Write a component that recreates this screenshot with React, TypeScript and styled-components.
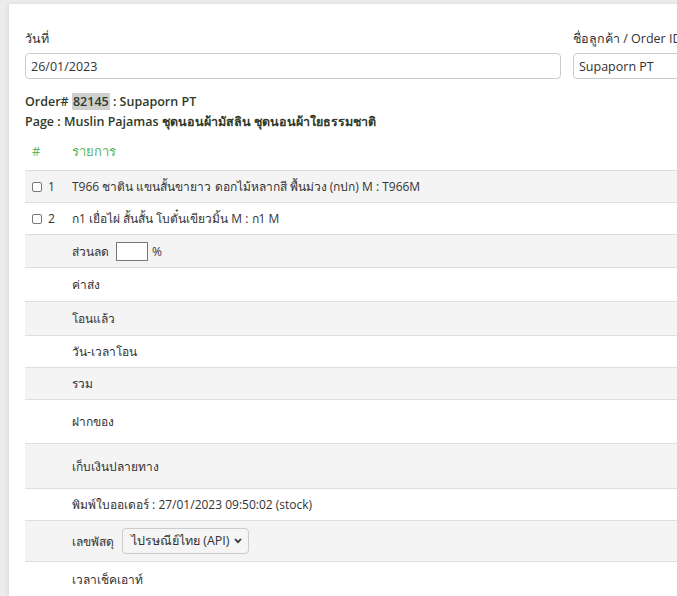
import React from "react";
import styled, { createGlobalStyle } from "styled-components";

const GlobalStyle = createGlobalStyle`
  html, body {
    margin: 0;
    padding: 0;
    background: #ececec;
    overflow: hidden;
  }
  body {
    font-family: "Open Sans", "Noto Sans", sans-serif;
    font-size: 12px;
    color: #333;
  }
  * { box-sizing: border-box; }
`;

const Page = styled.div`
  padding: 4px 0 0 9px;
  width: 1100px;
`;

const Card = styled.div`
  background: #fff;
  width: 1000px;
  min-height: 620px;
  padding: 26px 16px 0 16px;
  box-shadow: -1px 0 4px rgba(0, 0, 0, 0.08);
`;

const FormRow = styled.div`
  display: grid;
  grid-template-columns: 536px 300px;
  column-gap: 12px;
`;

const Field = styled.div`
  display: flex;
  flex-direction: column;
`;

const Label = styled.label`
  line-height: 18px;
  height: 18px;
  margin-bottom: 5px;
  font-size: 12.5px;
  color: #333;
  white-space: nowrap;
`;

const TextInput = styled.input`
  height: 26px;
  border: 1px solid #ccc;
  border-radius: 4px;
  padding: 0 5px;
  font-family: inherit;
  font-size: 12.5px;
  color: #333;
  background: #fff;
`;

const OrderInfo = styled.div`
  margin-top: 13px;
  margin-bottom: 2px;
  font-weight: 600;
  font-size: 12.5px;
  color: #2f3a2a;
`;

const InfoLine = styled.div`
  line-height: 20px;
`;

const Mark = styled.span`
  background: #cfcfcf;
  padding: 0 1px;
`;

const Table = styled.div`
  display: flex;
  flex-direction: column;
`;

const Row = styled.div<{ $h: number; $shade?: boolean; $head?: boolean }>`
  display: grid;
  grid-template-columns: 40px 1fr;
  align-items: center;
  height: ${(p) => p.$h}px;
  padding-bottom: ${(p) => (p.$head ? "2px" : "0")};
  border-top: ${(p) => (p.$head ? "none" : "1px solid #dedede")};
  background: ${(p) => (p.$shade ? "#f4f4f4" : "#fff")};
  color: ${(p) => (p.$head ? "#5cb85c" : "#333")};
  font-size: ${(p) => (p.$head ? "13px" : "12px")};
`;

const NumCell = styled.div`
  display: flex;
  align-items: center;
  gap: 6px;
  padding-left: 7px;
`;

const Cell = styled.div`
  display: flex;
  align-items: center;
  padding-left: 7px;
  white-space: nowrap;
`;

const Check = styled.input`
  appearance: none;
  width: 10px;
  height: 10px;
  margin: 0;
  border: 1px solid #777;
  border-radius: 2px;
  background: #fff;
`;

const SmallInput = styled.input`
  width: 32px;
  height: 19px;
  margin: 0 4px 0 7px;
  border: 1px solid #767676;
  border-radius: 0;
  padding: 0 3px;
  font-family: inherit;
  background: #fff;
`;

const SelectBox = styled.div`
  display: flex;
  align-items: center;
  justify-content: space-between;
  width: 127px;
  height: 26px;
  margin-left: 8px;
  padding: 0 6px 0 8px;
  border: 1px solid #ccc;
  border-radius: 4px;
  background: #f5f5f5;
  color: #333;
  font-size: 12.5px;
`;

const Chevron = () => (
  <svg width="8" height="6" viewBox="0 0 8 6">
    <polyline points="1,1 4,4.2 7,1" fill="none" stroke="#333" strokeWidth="1.8" />
  </svg>
);

type RowData = { h: number; shade?: boolean; content: React.ReactNode; num?: number };

const rows: RowData[] = [
  { h: 32, shade: true, num: 1, content: "T966 ชาติน แขนสั้นขายาว ดอกไม้หลากสี พื้นม่วง (กปก) M : T966M" },
  { h: 32, num: 2, content: "ก1 เยื่อไผ่ สั้นสั้น โบตั๋นเขียวมิ้น M : ก1 M" },
  {
    h: 33,
    shade: true,
    content: (
      <>
        ส่วนลด
        <SmallInput type="text" defaultValue="" />%
      </>
    ),
  },
  { h: 34, content: "ค่าส่ง" },
  { h: 34, shade: true, content: "โอนแล้ว" },
  { h: 32, content: "วัน-เวลาโอน" },
  { h: 32, shade: true, content: "รวม" },
  { h: 44, content: "ฝากของ" },
  { h: 45, shade: true, content: "เก็บเงินปลายทาง" },
  { h: 32, content: "พิมพ์ใบออเดอร์ : 27/01/2023 09:50:02 (stock)" },
  {
    h: 41,
    shade: true,
    content: (
      <>
        เลขพัสดุ
        <SelectBox>
          <span>ไปรษณีย์ไทย (API)</span>
          <Chevron />
        </SelectBox>
      </>
    ),
  },
  { h: 36, content: "เวลาเช็คเอาท์" },
];

export default function App() {
  return (
    <>
      <GlobalStyle />
      <Page>
        <Card>
          <FormRow>
            <Field>
              <Label>วันที่</Label>
              <TextInput type="text" defaultValue="26/01/2023" />
            </Field>
            <Field>
              <Label>ชื่อลูกค้า / Order ID</Label>
              <TextInput type="text" defaultValue="Supaporn PT" />
            </Field>
          </FormRow>
          <OrderInfo>
            <InfoLine>
              Order# <Mark>82145</Mark> : Supaporn PT
            </InfoLine>
            <InfoLine>Page : Muslin Pajamas ชุดนอนผ้ามัสลิน ชุดนอนผ้าใยธรรมชาติ</InfoLine>
          </OrderInfo>
          <Table>
            <Row $h={36} $head>
              <NumCell>#</NumCell>
              <Cell>รายการ</Cell>
            </Row>
            {rows.map((r, i) => (
              <Row key={i} $h={r.h} $shade={r.shade}>
                <NumCell>
                  {r.num !== undefined && (
                    <>
                      <Check type="checkbox" />
                      {r.num}
                    </>
                  )}
                </NumCell>
                <Cell>{r.content}</Cell>
              </Row>
            ))}
          </Table>
        </Card>
      </Page>
    </>
  );
}
